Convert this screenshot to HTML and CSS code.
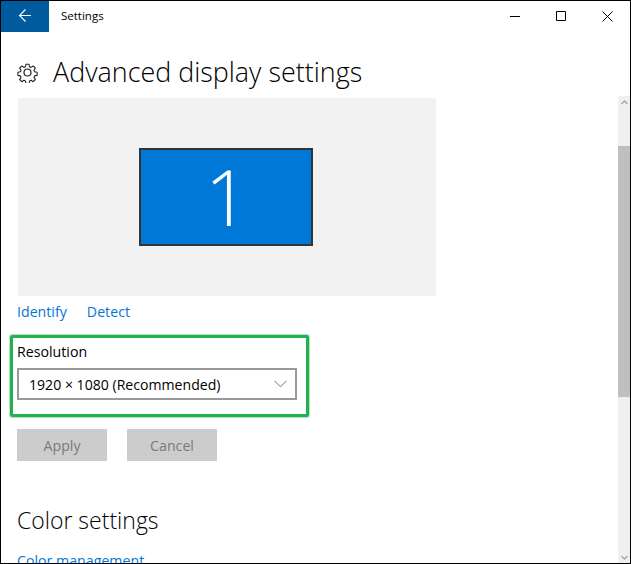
FILE: index.html
```html
<!DOCTYPE html>
<html lang="en">
<head>
<meta charset="utf-8">
<title>Settings</title>
<link rel="stylesheet" href="styles.css">
</head>
<body>
<div class="window">
  <header class="titlebar">
    <div class="back">
      <svg width="16" height="16" viewBox="0 0 16 16" fill="none" stroke="#fff" stroke-width="1.1"><path d="M14 7.5H2.5M8.5 1.5l-6 6 6 6"/></svg>
    </div>
    <div class="app-name">Settings</div>
    <div class="controls">
      <div class="control"><svg width="10" height="10" viewBox="0 0 10 10" fill="none" stroke="#000"><path d="M0 5.5h10"/></svg></div>
      <div class="control"><svg width="10" height="10" viewBox="0 0 10 10" fill="none" stroke="#000"><path d="M.5.5h9v9h-9z"/></svg></div>
      <div class="control"><svg width="11" height="11" viewBox="0 0 11 11" fill="none" stroke="#000" stroke-width="1"><path d="M.5.5l10 10M10.5.5l-10 10"/></svg></div>
    </div>
  </header>
  <div class="page-head">
    <svg class="gear" width="21" height="21" viewBox="0 0 24 24" fill="none" stroke="#222" stroke-width="1.4" stroke-linejoin="round"><path d="M10 1.5h4l.6 3.2 1.9.8 2.7-1.8 2.8 2.8-1.8 2.7.8 1.9 3.2.6v4l-3.2.6-.8 1.9 1.8 2.7-2.8 2.8-2.7-1.8-1.9.8-.6 3.2h-4l-.6-3.2-1.9-.8-2.7 1.8-2.8-2.8 1.8-2.7-.8-1.9-3.2-.6v-4l3.2-.6.8-1.9-1.8-2.7 2.8-2.8 2.7 1.8 1.9-.8z" transform="translate(1.2 1.2) scale(.9)"/><circle cx="12" cy="12" r="4"/></svg>
    <h1 class="page-title">Advanced display settings</h1>
  </div>
  <div class="body">
    <main class="content">
      <div class="preview"><div class="monitor">1</div></div>
      <div class="links"><a class="link">Identify</a><a class="link">Detect</a></div>
      <div class="highlight">
        <div class="field-label">Resolution</div>
        <div class="select"><span>1920 × 1080 (Recommended)</span>
          <svg width="13" height="8" viewBox="0 0 13 8" fill="none" stroke="#777"><path d="M.5.8l6 6 6-6"/></svg>
        </div>
      </div>
      <div class="buttons"><div class="button">Apply</div><div class="button">Cancel</div></div>
      <h2 class="section-title">Color settings</h2>
      <a class="link section-link">Color management</a>
    </main>
    <div class="scrollbar">
      <div class="arrow"><svg width="7" height="5" viewBox="0 0 7 5" fill="none" stroke="#a6a6a6" stroke-width="1.3"><path d="M.5 4l3-3 3 3"/></svg></div>
      <div class="track"><div class="thumb"></div></div>
      <div class="arrow"><svg width="7" height="5" viewBox="0 0 7 5" fill="none" stroke="#a6a6a6" stroke-width="1.3"><path d="M.5 1l3 3 3-3"/></svg></div>
    </div>
  </div>
</div>
</body>
</html>
```
FILE: styles.css
```css
* { box-sizing: border-box; }
html, body { margin: 0; height: 100%; overflow: hidden; }
body { font-family: "Open Sans", "Noto Sans", sans-serif; background: #fff; color: #000; }
.window { width: 631px; height: 564px; border: 1px solid #000; display: flex; flex-direction: column; overflow: hidden; background: #fff; }
.titlebar { height: 31px; display: flex; align-items: center; flex: none; }
.back { width: 48px; height: 31px; background: #005a9e; display: flex; align-items: center; justify-content: center; padding-bottom: 1px; }
.app-name { margin-left: 12px; font-size: 11.5px; color: #000; padding-bottom: 2px; }
.controls { margin-left: auto; display: flex; padding-bottom: 1px; }
.control { width: 46px; height: 30px; display: flex; align-items: center; justify-content: center; }
.page-head { height: 64px; flex: none; display: flex; align-items: center; padding-left: 16px; padding-top: 17px; }
.gear { flex: none; }
.page-title { margin: -2px 0 0 15px; font-size: 26.9px; font-weight: 300; color: #000; line-height: 36px; }
.body { flex: 1; min-height: 0; display: flex; }
.content { flex: 1; min-width: 0; overflow: hidden; padding: 2px 0 0 16px; }
.preview { width: 418px; height: 198px; margin-left: 1px; background: #f2f2f2; display: flex; align-items: center; justify-content: center; padding-right: 2px; }
.monitor { width: 174px; height: 98px; background: #0078d7; border: 2px solid #333; color: #fff; font-size: 78px; font-weight: 300; line-height: 92px; text-align: center; padding-left: 2px; }
.links { display: flex; gap: 20px; margin-top: 6px; height: 20px; }
.link { color: #0078d7; font-size: 14.2px; line-height: 20px; display: block; }
.highlight { width: 299px; height: 82px; margin: 13px 0 0 -7px; border: 3px solid #22b14c; border-radius: 2px; padding: 4px 0 0 4px; box-shadow: 0 0 0 1px #b5e4c3; }
.field-label { font-size: 14.2px; line-height: 20px; color: #000; }
.select { width: 280px; height: 32px; margin-top: 6px; border: 2px solid #999; display: flex; align-items: center; justify-content: space-between; padding: 0 8px 0 10px; font-size: 14.1px; color: #000; }
.buttons { display: flex; gap: 20px; margin: 12px 0 0 0; }
.button { width: 90px; height: 32px; background: #ccc; color: #7a7a7a; font-size: 14.2px; display: flex; align-items: center; justify-content: center; }
.section-title { margin: 44px 0 0; font-size: 23px; font-weight: 300; line-height: 30px; color: #000; }
.section-link { margin-top: 16px; }
.scrollbar { width: 12px; flex: none; background: #f0f0f0; display: flex; flex-direction: column; }
.arrow { height: 12px; flex: none; display: flex; align-items: center; justify-content: center; }
.track { flex: 1; padding-top: 38px; }
.thumb { height: 251px; background: #bfbfbf; }
```
